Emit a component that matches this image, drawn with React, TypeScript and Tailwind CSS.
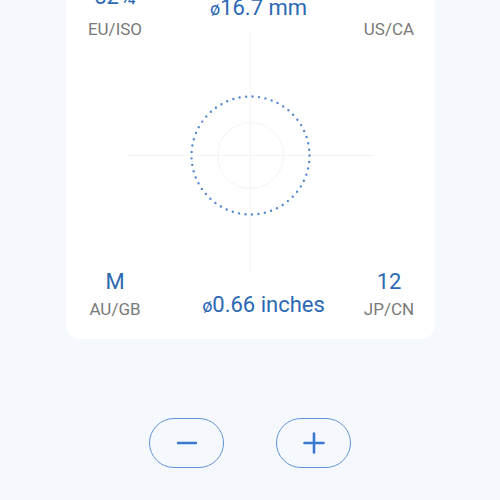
const font = { fontFamily: 'Roboto, "Noto Sans", sans-serif' };

const Reading = ({ value, label }: { value: string; label: string }) => (
  <div className="flex flex-col items-center">
    <div className="text-[22px] leading-[26px] text-[#2c69b4]">{value}</div>
    <div className="mt-[4px] text-[17px] leading-[20px] text-[#7a7a7a]">{label}</div>
  </div>
);

const Crosshair = () => (
  <svg width="245" height="238" viewBox="0 0 245 238" className="mx-auto block">
    <line x1="122.5" y1="0" x2="122.5" y2="238" stroke="#f3f4f5" strokeWidth="1" />
    <line x1="0" y1="122.5" x2="245" y2="122.5" stroke="#f3f4f5" strokeWidth="1" />
    <circle cx="122.5" cy="122.5" r="33" fill="none" stroke="#f3f4f5" strokeWidth="1" />
    <circle
      cx="122.5"
      cy="122.5"
      r="59"
      fill="none"
      stroke="#5688cd"
      strokeWidth="2.4"
      strokeLinecap="round"
      strokeDasharray="0 6.504"
    />
  </svg>
);

export default function App() {
  return (
    <div className="min-h-[500px] w-[500px] overflow-hidden bg-[#f5f9fe]" style={font}>
      <div className="-mt-[40px] flex flex-col items-center">
        <div className="ml-[1px] w-[369px] rounded-[14px] bg-white pt-[24px] pb-[20px]">
          {/* top readings */}
          <div className="grid grid-cols-[98px_1fr_92px] items-start">
            <div className="flex flex-col items-center">
              <div className="text-[22px] leading-[26px] text-[#2c69b4]">52¾</div>
              <div className="mt-[9px] text-[17px] leading-[20px] text-[#7a7a7a]">EU/ISO</div>
            </div>
            <div className="mt-[11px] pl-[10px] text-center text-[22px] leading-[26px] text-[#2c69b4]">
              <span className="text-[18px]">ø</span>16.7 mm
            </div>
            <div className="flex flex-col items-center">
              <div className="text-[22px] leading-[26px] text-[#2c69b4]">--</div>
              <div className="mt-[9px] text-[17px] leading-[20px] text-[#7a7a7a]">US/CA</div>
            </div>
          </div>

          <div className="-mt-[6px]">
            <Crosshair />
          </div>

          {/* bottom readings */}
          <div className="-mt-[2px] grid grid-cols-[98px_1fr_92px] items-end">
            <Reading value="M" label="AU/GB" />
            <div className="pl-[20px] text-center text-[22px] leading-[26px] text-[#2c69b4]">
              <span className="text-[18px]">ø</span>0.66 inches
            </div>
            <Reading value="12" label="JP/CN" />
          </div>
        </div>

        <div className="mt-[79px] flex gap-[52px]">
          <button className="flex h-[50px] w-[75px] items-center justify-center rounded-full border-[1.5px] border-[#6393d4]">
            <svg width="20" height="20" viewBox="0 0 20 20">
              <line x1="1" y1="10" x2="19" y2="10" stroke="#3a77cf" strokeWidth="2.6" strokeLinecap="round" />
            </svg>
          </button>
          <button className="flex h-[50px] w-[75px] items-center justify-center rounded-full border-[1.5px] border-[#6393d4]">
            <svg width="22" height="22" viewBox="0 0 22 22">
              <line x1="1.5" y1="11" x2="20.5" y2="11" stroke="#3a77cf" strokeWidth="2.6" strokeLinecap="round" />
              <line x1="11" y1="1.5" x2="11" y2="20.5" stroke="#3a77cf" strokeWidth="2.6" strokeLinecap="round" />
            </svg>
          </button>
        </div>
      </div>
    </div>
  );
}
